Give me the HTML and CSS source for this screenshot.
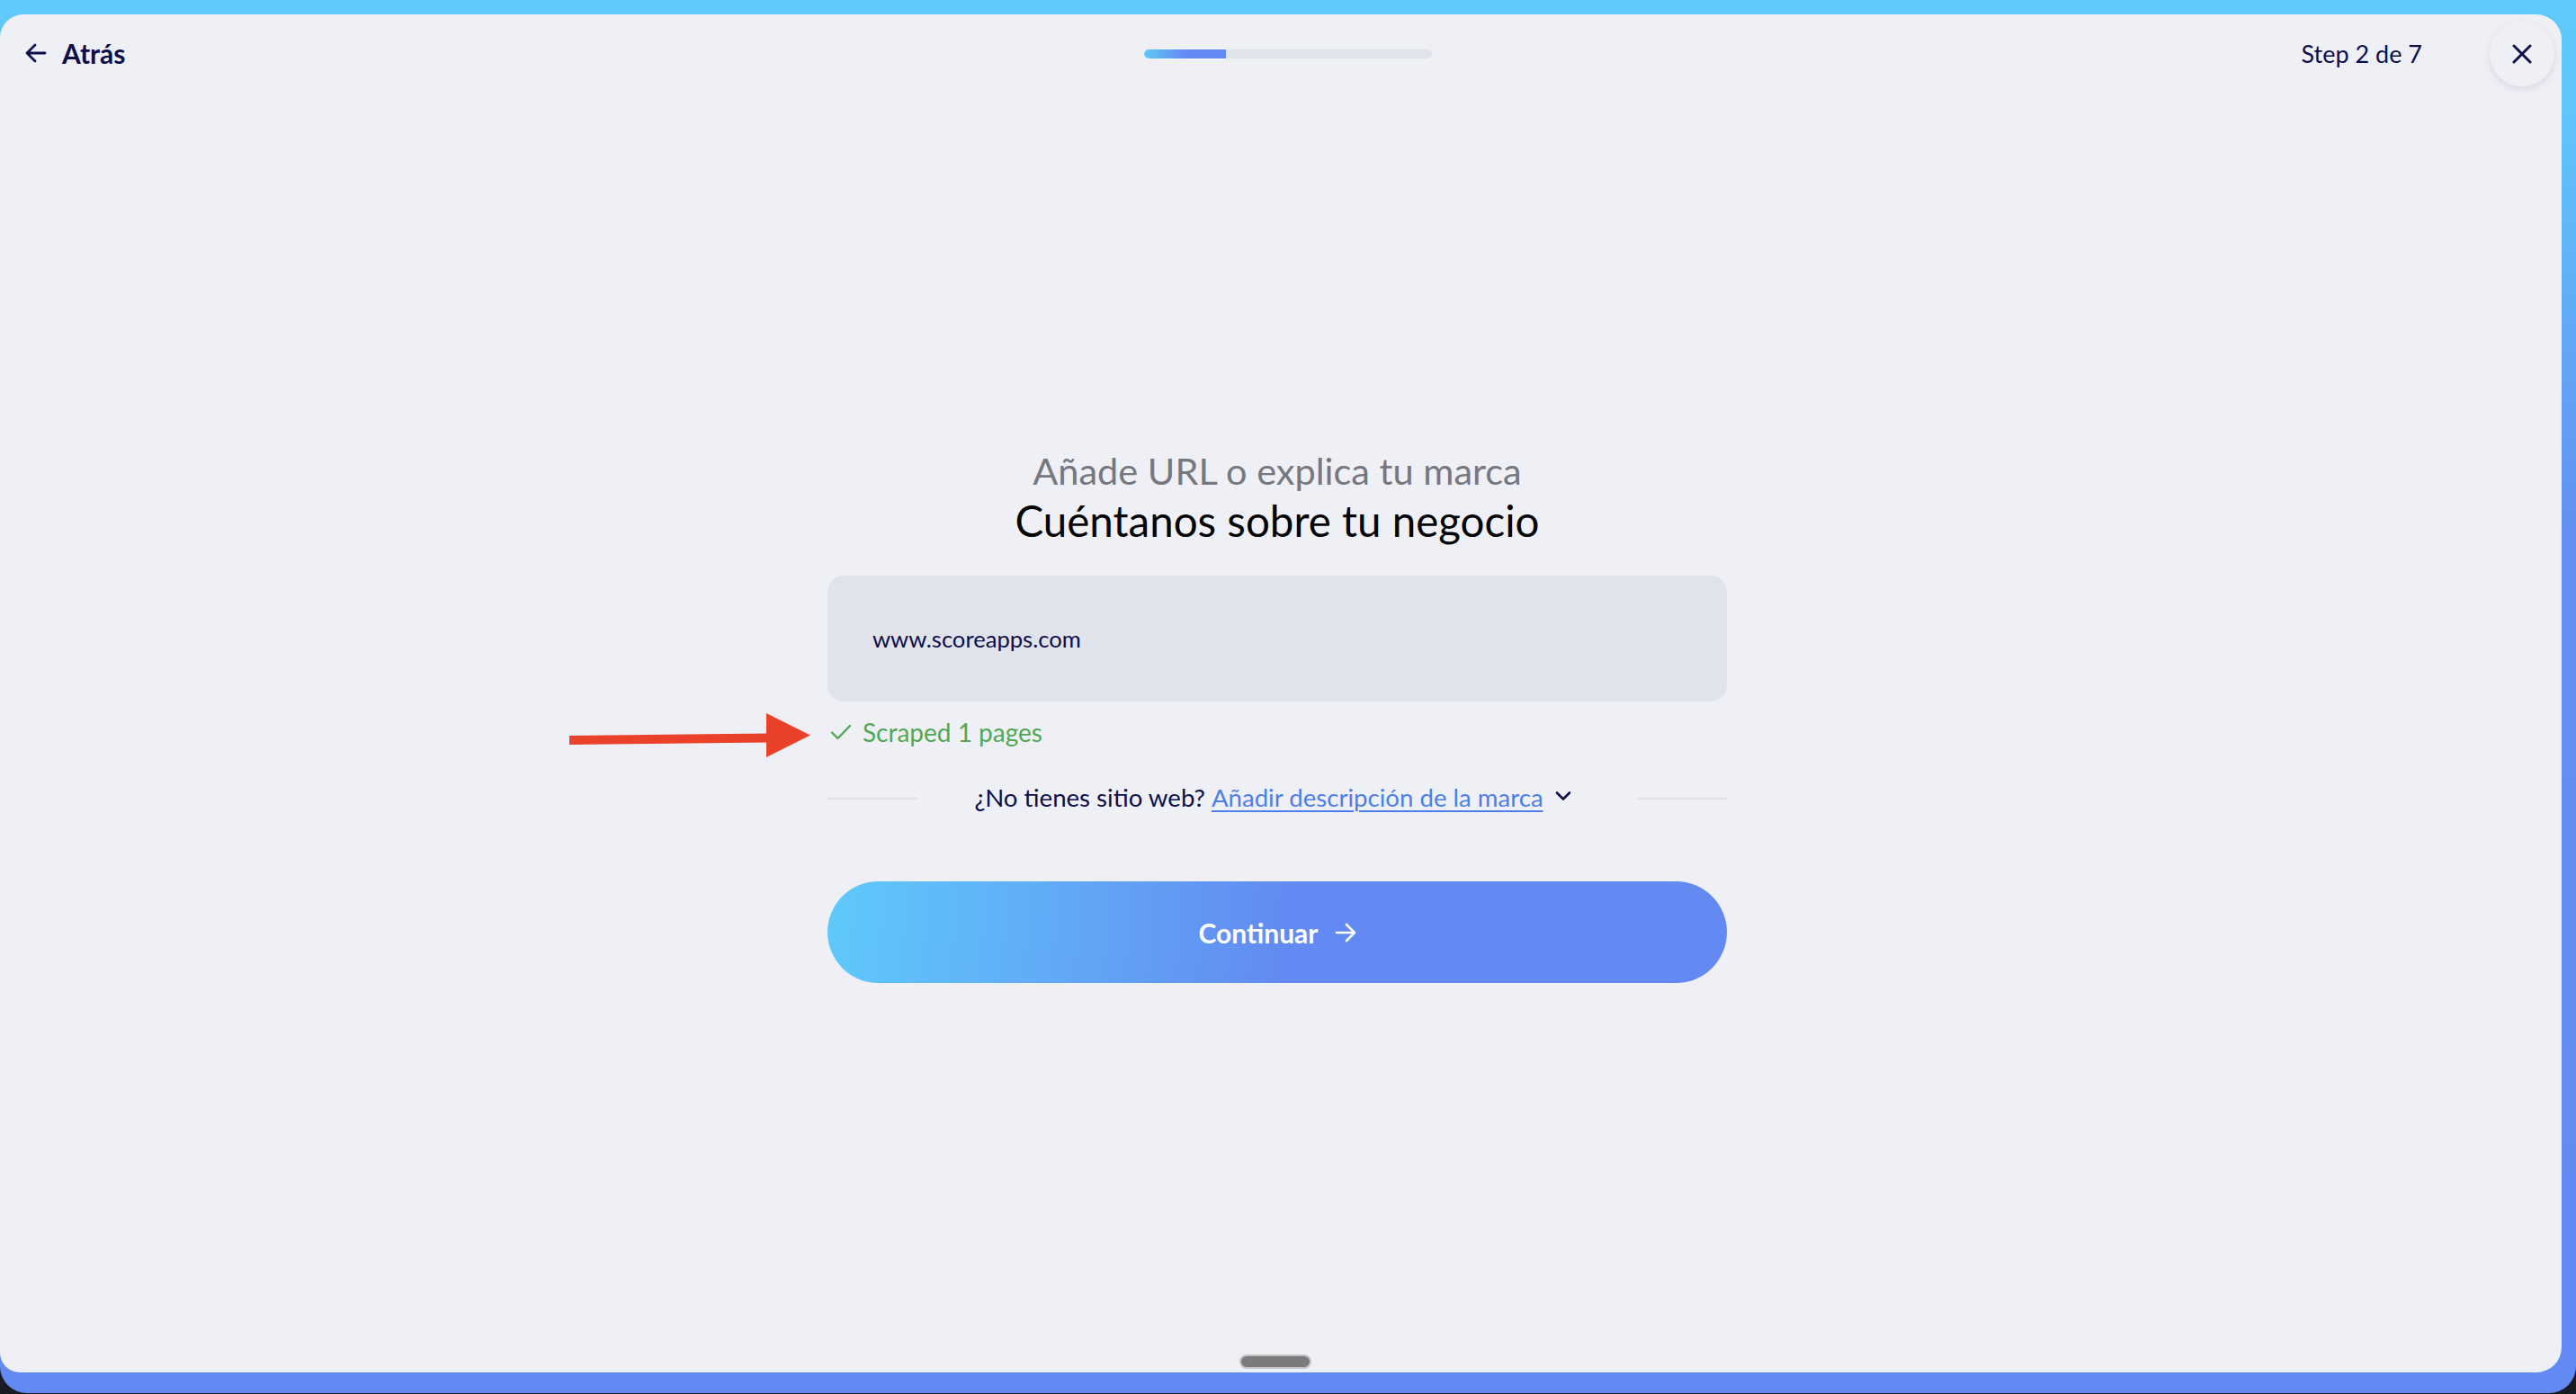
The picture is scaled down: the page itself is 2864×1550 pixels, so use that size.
FILE: index.html
```html
<!DOCTYPE html>
<html lang="es">
<head>
<meta charset="utf-8">
<title>Cuéntanos sobre tu negocio</title>
<link rel="stylesheet" href="styles.css">
</head>
<body>
<div class="window">
  <div class="panel">
    <header class="topbar">
      <div class="left">
        <button class="back">
          <svg class="back-icon" width="24" height="22" viewBox="0 0 24 22" fill="none" stroke="#0d0e4a" stroke-width="2.8" stroke-linecap="round" stroke-linejoin="round"><path d="M22 11H2.5M11 2L2 11l9 9"/></svg>
          <span>Atrás</span>
        </button>
      </div>
      <div class="progress"><div class="progress-fill" style="width:28.57%"></div></div>
      <div class="right">
        <span class="step">Step 2 de 7</span>
        <button class="close" aria-label="Cerrar">
          <svg width="22" height="22" viewBox="0 0 22 22" fill="none" stroke="#0d0e4a" stroke-width="3" stroke-linecap="round"><path d="M2 2l18 18M20 2L2 20"/></svg>
        </button>
      </div>
    </header>

    <main class="main">
      <div class="column">
        <div class="titles">
          <p class="subtitle">Añade URL o explica tu marca</p>
          <h1 class="title">Cuéntanos sobre tu negocio</h1>
        </div>
        <div class="input">www.scoreapps.com</div>
        <div class="status">
          <svg class="check" width="24" height="20" viewBox="0 0 24 20" fill="none" stroke="#4fa852" stroke-width="2.4" stroke-linecap="round" stroke-linejoin="round"><path d="M2 10.5l6.5 6.5L22 3"/></svg>
          <span>Scraped 1 pages</span>
        </div>
        <div class="divider">
          <span class="rule"></span>
          <span class="divider-text">¿No tienes sitio web? <a href="#" class="link">Añadir descripción de la marca</a>
            <svg class="chev" width="20" height="12" viewBox="0 0 20 12" fill="none" stroke="#0d0e4a" stroke-width="2.6" stroke-linecap="round" stroke-linejoin="round"><path d="M3 2.5l7 7 7-7"/></svg>
          </span>
          <span class="rule"></span>
        </div>
        <button class="continue">Continuar
          <svg width="24" height="22" viewBox="0 0 24 22" fill="none" stroke="#ffffff" stroke-width="2.6" stroke-linecap="round" stroke-linejoin="round"><path d="M2 11h19.5M13 2l9 9-9 9"/></svg>
        </button>
      </div>
    </main>

    <svg class="annotation" width="280" height="70" viewBox="0 0 280 70">
      <path d="M3 46 L226 43.5" stroke="#e9412a" stroke-width="10"/>
      <polygon points="222,16 271,40.5 222,65" fill="#e9412a"/>
    </svg>

    <div class="home-indicator"></div>
  </div>
</div>
</body>
</html>
```

FILE: styles.css
```css
* { box-sizing: border-box; }

html, body {
  margin: 0;
  padding: 0;
}

body {
  background: #1a1a22;
  font-family: "Lato", "Noto Sans", sans-serif;
  color: #0d0e4a;
}

.window {
  width: 2864px;
  height: 1549px;
  background: linear-gradient(180deg, #5fcafa 0%, #5fc6fa 8%, #6390f2 38%, #6389f2 100%);
  border-radius: 0 0 30px 30px;
  padding: 16px 16px 23px 0;
}

.panel {
  position: relative;
  width: 2848px;
  height: 1510px;
  background: #eff0f5;
  border-radius: 26px 28px 28px 22px;
  display: flex;
  flex-direction: column;
}

/* ---------- top bar ---------- */
.topbar {
  display: grid;
  grid-template-columns: 1fr auto 1fr;
  align-items: center;
  padding: 8px 8px 0 24px;
  height: 80px;
}

.left { display: flex; align-items: center; }

.back {
  display: flex;
  align-items: center;
  gap: 17px;
  background: none;
  border: 0;
  padding: 0 0 0 4px;
  margin-top: -3px;
  font-family: "Lato", sans-serif;
  font-weight: 700;
  font-size: 30px;
  color: #0d0e4a;
  cursor: pointer;
}

.back-icon { margin-top: 0; }

.progress {
  width: 320px;
  height: 10px;
  border-radius: 5px;
  background: #e1e3eb;
  overflow: hidden;
}

.progress-fill {
  height: 100%;
  border-radius: 5px 0 0 5px;
  background: linear-gradient(90deg, #5fcafa 0%, #6389f2 50%, #6389f2 100%);
}

.right {
  display: flex;
  align-items: center;
  justify-content: flex-end;
  gap: 75px;
}

.step {
  font-size: 27px;
  color: #0d0e4a;
  margin-top: -2px;
}

.close {
  width: 72px;
  height: 72px;
  border-radius: 50%;
  border: 0;
  background: #eff0f5;
  box-shadow: 0 3px 8px rgba(20, 20, 60, 0.10);
  display: flex;
  align-items: center;
  justify-content: center;
  padding: 0;
  cursor: pointer;
}

/* ---------- main ---------- */
.main {
  flex: 1;
  display: flex;
  justify-content: center;
  padding: 399px 8px 0 0;
}

.column {
  width: 1000px;
  display: flex;
  flex-direction: column;
}

.titles { text-align: center; }

.subtitle {
  margin: 0;
  font-size: 41.5px;
  line-height: 56px;
  color: #76777f;
}

.title {
  margin: 0;
  font-size: 47.5px;
  line-height: 56px;
  font-weight: 400;
  color: #050508;
}

.input {
  margin-top: 33px;
  height: 140px;
  border-radius: 18px;
  background: #e1e3eb;
  display: flex;
  align-items: center;
  padding: 0 50px;
  font-size: 25.6px;
  color: #0d0e4a;
}

.status {
  margin-top: 14px;
  height: 40px;
  display: flex;
  align-items: center;
  gap: 12px;
  padding-left: 3px;
  font-size: 28px;
  color: #4fa852;
}

.divider {
  margin-top: 32px;
  height: 40px;
  display: flex;
  align-items: center;
  font-size: 27.6px;
  color: #0d0e4a;
}

.rule {
  flex: 1;
  height: 2px;
  background: #e2e3ea;
  margin-top: 4px;
}

.divider-text {
  display: flex;
  align-items: center;
  margin: 0 66px 0 63px;
  white-space: pre;
}

.link {
  color: #4c7fe9;
  text-decoration: underline;
  text-decoration-thickness: 2px;
  text-underline-offset: 4px;
}

.chev {
  margin-left: 12px;
  margin-right: 6px;
  margin-top: -2px;
}

.continue {
  margin-top: 74px;
  height: 113px;
  border-radius: 57px;
  border: 0;
  background: linear-gradient(95deg, #5fcafa 0%, #6389f2 52%, #6389f2 100%);
  color: #ffffff;
  font-family: "Lato", sans-serif;
  font-weight: 700;
  font-size: 30px;
  display: flex;
  align-items: center;
  justify-content: center;
  gap: 18px;
  cursor: pointer;
}

/* ---------- overlays ---------- */
.annotation {
  position: absolute;
  left: 630px;
  top: 761px;
}

.home-indicator {
  position: absolute;
  left: 1378px;
  bottom: 4px;
  width: 80px;
  height: 16px;
  border-radius: 8px;
  background: #7b7b7b;
  border: 2px solid #c4c4c6;
}
```
